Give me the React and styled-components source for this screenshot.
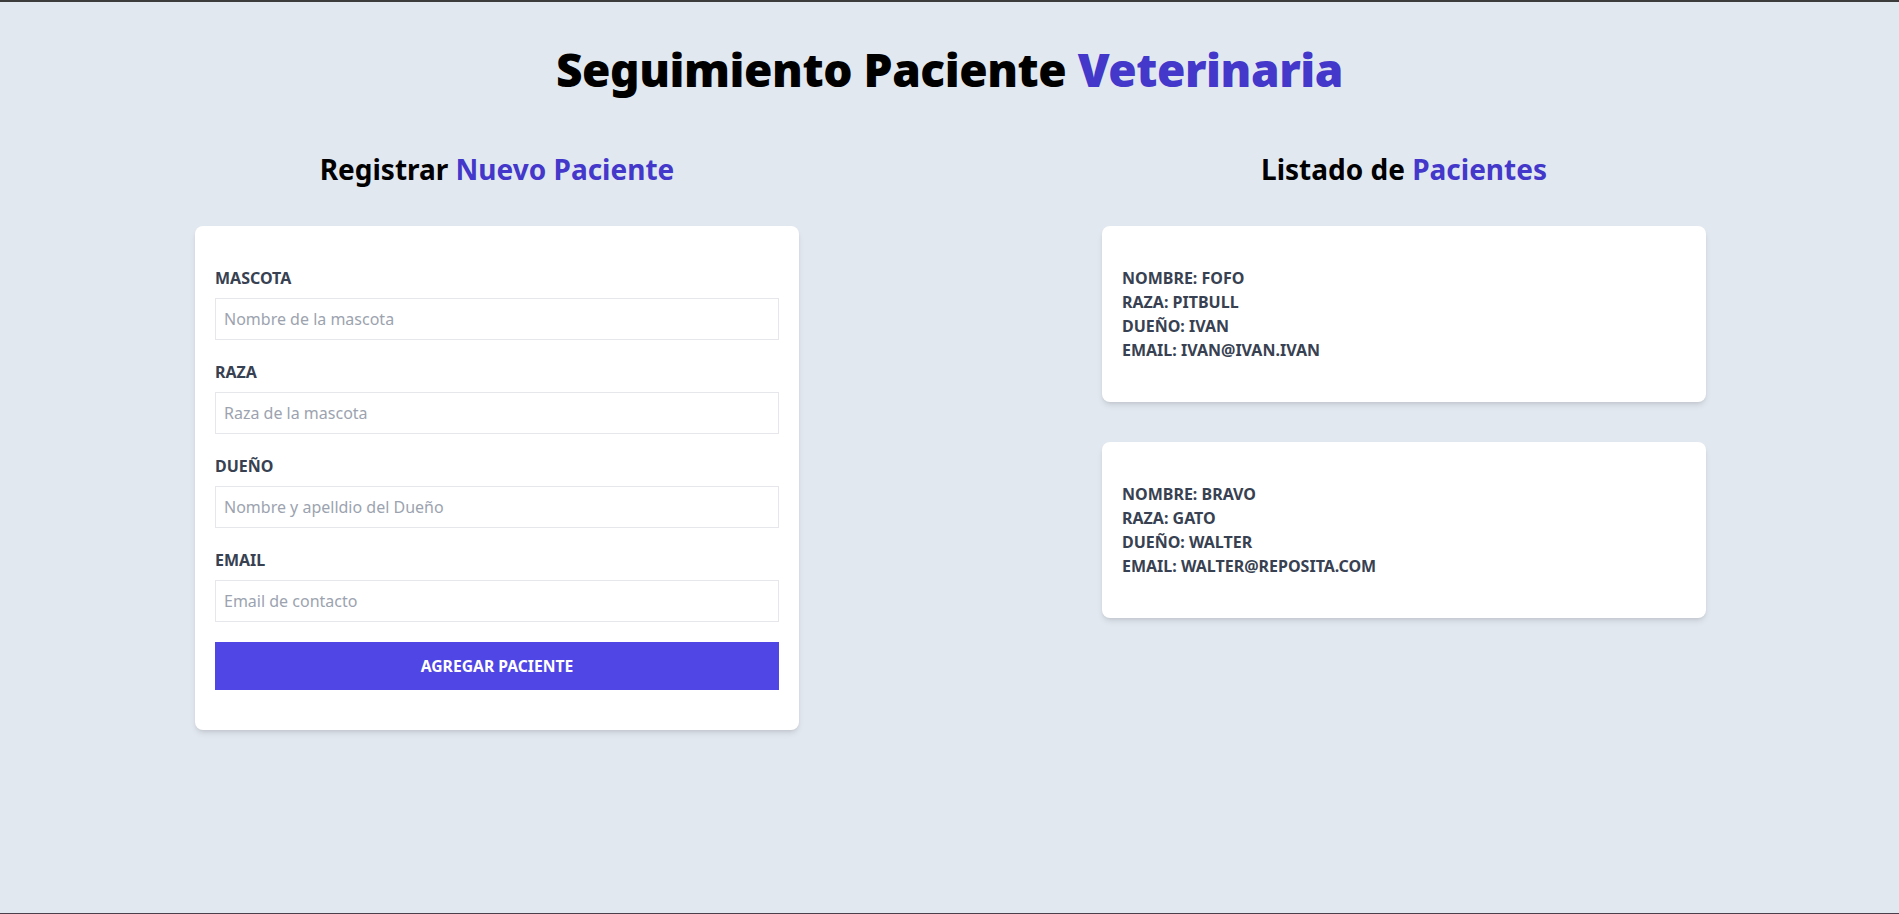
import React from 'react';
import styled, { createGlobalStyle } from 'styled-components';

const GlobalStyle = createGlobalStyle`
    *, *::before, *::after { box-sizing: border-box; }
    body {
        margin: 0;
        font-family: "Noto Sans", "Open Sans", sans-serif;
        background: #e2e8f0;
    }
`;

const pacientes = [
    { nombre: 'FOFO', raza: 'PITBULL', dueno: 'IVAN', email: 'IVAN@IVAN.IVAN' },
    { nombre: 'BRAVO', raza: 'GATO', dueno: 'WALTER', email: 'WALTER@REPOSITA.COM' },
];

const campos = [
    { label: 'MASCOTA', placeholder: 'Nombre de la mascota' },
    { label: 'RAZA', placeholder: 'Raza de la mascota' },
    { label: 'DUEÑO', placeholder: 'Nombre y apelldio del Dueño' },
    { label: 'EMAIL', placeholder: 'Email de contacto' },
];

const App = () => {
    return (
        <Page>
            <GlobalStyle />
            <Title>
                Seguimiento Paciente <Accent>Veterinaria</Accent>
            </Title>
            <Columns>
                <Column>
                    <Heading>
                        Registrar <Accent>Nuevo Paciente</Accent>
                    </Heading>
                    <Card as="form">
                        {campos.map(c => (
                            <Field key={c.label}>
                                <Label>{c.label}</Label>
                                <Input type="text" placeholder={c.placeholder} />
                            </Field>
                        ))}
                        <Button type="button">Agregar Paciente</Button>
                    </Card>
                </Column>
                <Column>
                    <Heading>
                        Listado de <Accent>Pacientes</Accent>
                    </Heading>
                    {pacientes.map(p => (
                        <Card key={p.nombre}>
                            <Line>NOMBRE: {p.nombre}</Line>
                            <Line>RAZA: {p.raza}</Line>
                            <Line>DUEÑO: {p.dueno}</Line>
                            <Line>EMAIL: {p.email}</Line>
                        </Card>
                    ))}
                </Column>
            </Columns>
        </Page>
    )
}

const Page = styled.div`
    min-height: 100vh;
    border-top: 2px solid #3c3c3c;
    border-bottom: 1px solid #4a3f4a;
    padding-top: 43px;
`

const Title = styled.h1`
    margin: 0;
    font-size: 46px;
    line-height: 48px;
    font-weight: 900;
    letter-spacing: -0.45px;
    text-align: center;
    color: #000;
`

const Accent = styled.span`
    color: #4338ca;
`

const Columns = styled.div`
    display: grid;
    grid-template-columns: 604px 604px;
    column-gap: 303px;
    padding-left: 195px;
    margin-top: 58px;
`

const Column = styled.div``

const Heading = styled.h2`
    margin: 0 0 39px;
    font-size: 28px;
    line-height: 36px;
    font-weight: 700;
    text-align: center;
    color: #000;
`

const Card = styled.div`
    display: block;
    background: #fff;
    border-radius: 8px;
    box-shadow: 0 4px 6px -1px rgba(0,0,0,.1), 0 2px 4px -2px rgba(0,0,0,.1);
    padding: 40px 20px;
    margin-bottom: 40px;
`

const Field = styled.div`
    margin-bottom: 20px;
`

const Label = styled.label`
    display: block;
    font-size: 16px;
    line-height: 24px;
    font-weight: 700;
    color: #374151;
`

const Input = styled.input`
    display: block;
    width: 100%;
    margin-top: 8px;
    padding: 8px;
    border: 1px solid #e5e7eb;
    font-family: inherit;
    font-size: 16px;
    line-height: 24px;
    outline: none;
    &::placeholder { color: #9ca3af; }
`

const Button = styled.button`
    display: block;
    width: 100%;
    padding: 12px;
    border: none;
    background: #4f46e5;
    color: #fff;
    font-family: inherit;
    font-size: 15.7px;
    line-height: 24px;
    font-weight: 700;
    text-transform: uppercase;
    cursor: pointer;
`

const Line = styled.p`
    margin: 0;
    font-size: 16px;
    line-height: 24px;
    font-weight: 700;
    color: #374151;
`

export default App;
